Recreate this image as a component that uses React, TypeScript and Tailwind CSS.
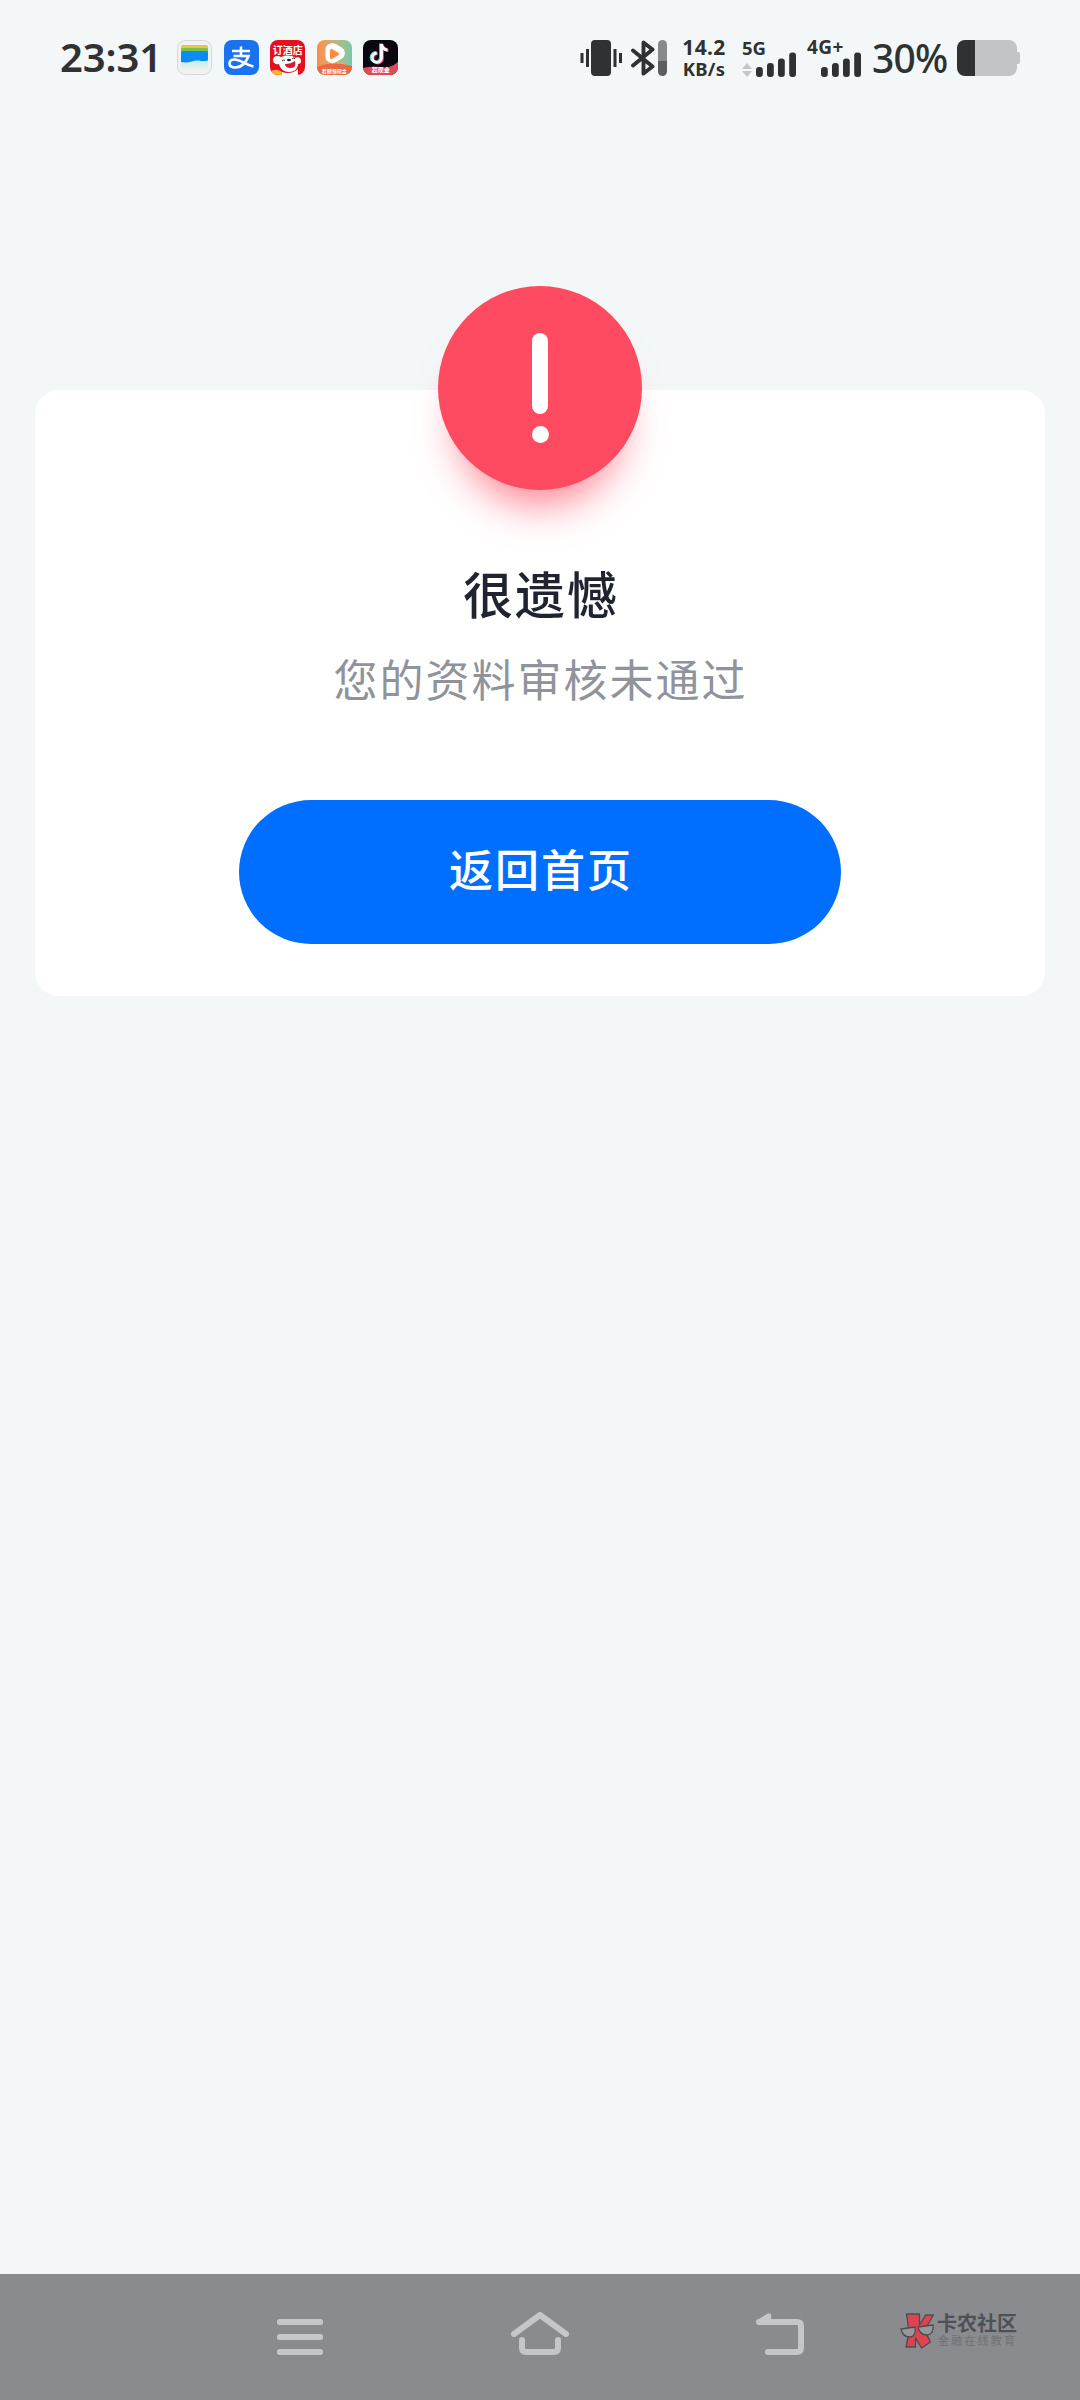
import React from "react";

const ink = "#2f3132";

function WalletIcon() {
  return (
    <svg width="35" height="35" viewBox="0 0 35 35">
      <defs>
        <linearGradient id="walletFade" x1="0" y1="0" x2="0" y2="1">
          <stop offset="0" stopColor="#bdeaf6" />
          <stop offset="1" stopColor="#f3f4ea" />
        </linearGradient>
      </defs>
      <rect x="0.5" y="0.5" width="34" height="34" rx="8" fill="#f0f2f2" stroke="#d6d8da" />
      <rect x="4" y="19" width="27" height="12" rx="3" fill="url(#walletFade)" />
      <rect x="4" y="5" width="27" height="9" rx="2" fill="#e6c545" />
      <rect x="4" y="8" width="27" height="9" rx="1" fill="#7cc142" />
      <path d="M4 12.500q0-1.500 1.500-1.500h24q1.500 0 1.500 1.500V20.500q-5 1-9 0-4-.5-7 1-6 1.500-11 .5z" fill="#0a8cf5" />
    </svg>
  );
}

function AlipayIcon() {
  return (
    <div className="size-[35px] overflow-hidden rounded-[8px] bg-[#1a72f0]">
      <svg width="35" height="35" viewBox="0 0 35 35" fill="none" stroke="#fff" strokeWidth="2.600">
        <path d="M8 11h18M17 6.500v9M9.500 16h15c-2 6-7 11.500-13 11.500-4 0-6-1.500-6-4s2-4 5-4c6 0 10 5 19 7" />
      </svg>
    </div>
  );
}

function HotelIcon() {
  return (
    <div className="relative size-[35px] overflow-hidden rounded-[8px] bg-[#e5101f]">
      <svg width="35" height="35" viewBox="0 0 35 35">
        <path d="M3 20c0-4 4-5 8-3 5-2 11-2 14 1 3-2 6 0 6 3 0 2-1 3-3 3 0 5-4 8-9 8-6 0-9-4-10-8-3 1-6-1-6-4z" fill="#fff" />
        <path d="M15 24c4 0 7-1 10-3 1 4 0 7-4 7-3 0-6-1-6-4z" fill="#d81a2c" />
        <ellipse cx="19" cy="20" rx="2" ry="1.300" fill="#222" />
        <path d="M12 21q1.500-2 3-.500M22 19q1.500-2 3 0" fill="none" stroke="#333" strokeWidth="1" />
        <path d="M12 32c6 2 12 1 16-3v6H12z" fill="#fff" />
        <path d="M0 32c4-3 8-3 12 0v3H0z" fill="#ffb02e" />
      </svg>
      <span className="absolute inset-x-0 top-[5px] text-center text-[10px] leading-[11px] font-bold whitespace-nowrap text-white">订酒店</span>
    </div>
  );
}

function VideoIcon() {
  return (
    <div className="relative size-[35px] overflow-hidden rounded-[8px] bg-linear-to-r from-[#ff8b45] to-[#70cba8]">
      <svg width="35" height="35" viewBox="0 0 35 35">
        <path d="M0 27c12-5 23-4 35-1v9H0z" fill="#ef6740" />
        <path
          d="M11 10c0-4 4-5 7-3.500l4.500 2.700c4 2.300 3.500 6 0 8l-5 2.800c-3 1.500-6.500 0-6.500-3.500z"
          fill="#fff"
          stroke="#fff"
          strokeWidth="5"
          strokeLinejoin="round"
        />
        <path d="M14.500 10.500v7l6-3.500z" fill="#ff8a42" stroke="#ff8a42" strokeWidth="3" strokeLinejoin="round" />
      </svg>
      <span className="absolute inset-x-0 bottom-[1px] text-center text-[5px] leading-[6px] font-bold whitespace-nowrap text-white">看剧领现金</span>
    </div>
  );
}

function TiktokIcon() {
  return (
    <div className="relative size-[35px] overflow-hidden rounded-[8px] bg-[#0b0711]">
      <svg width="35" height="35" viewBox="0 0 35 35" fill="none" strokeWidth="2.800">
        <path d="M18.500 4v13.500a4.700 4.700 0 1 1-4.700-4.500M18.500 4c.5 3.500 2.500 5.500 6 6" stroke="#25e6e0" transform="translate(-1 -.5)" />
        <path d="M18.500 4v13.500a4.700 4.700 0 1 1-4.700-4.500M18.500 4c.5 3.500 2.500 5.500 6 6" stroke="#f7385f" transform="translate(1 .7)" />
        <path d="M18.500 4v13.500a4.700 4.700 0 1 1-4.700-4.500M18.500 4c.5 3.500 2.500 5.500 6 6" stroke="#fff" />
        <path d="M0 28c10-3 18 0 26-1 4-1 6-3 9-5v13H0z" fill="#e24a58" />
      </svg>
      <span className="absolute inset-x-0 bottom-[1px] text-center text-[6px] leading-[7px] font-bold whitespace-nowrap text-white">超现金</span>
    </div>
  );
}

function VibrateIcon() {
  return (
    <svg width="43" height="36" viewBox="0 0 43 36" fill={ink}>
      <rect x="11" width="20" height="36" rx="4" />
      <rect x="0.500" y="13" width="3" height="10" />
      <rect x="6" y="9" width="3" height="18" />
      <rect x="33.500" y="9" width="3" height="18" />
      <rect x="39" y="13" width="3" height="10" />
    </svg>
  );
}

function BluetoothIcon() {
  return (
    <svg width="36" height="36" viewBox="0 0 36 36">
      <path
        d="M2 10.500L21.500 26.500 12.500 33.500V2.500L21.500 9.500 2 25.500"
        fill="none"
        stroke={ink}
        strokeWidth="3.900"
        strokeLinejoin="round"
        strokeLinecap="round"
      />
      <path d="M27 21h9v10.500a4.500 4.500 0 0 1-9 0z" fill="#5c5e5f" />
      <path d="M27 21V4.500a4.500 4.500 0 0 1 9 0V21z" fill="#88898a" />
    </svg>
  );
}

function SignalBars() {
  return (
    <svg width="41" height="25" viewBox="0 0 41 25" fill={ink}>
      <rect y="15" width="6.800" height="10" rx="3" />
      <rect x="11" y="11" width="6.800" height="14" rx="3" />
      <rect x="22" y="6.500" width="6.800" height="18.500" rx="3" />
      <rect x="33.200" y="0.500" width="6.800" height="24.500" rx="3" />
    </svg>
  );
}

function BatteryIcon() {
  return (
    <svg width="63" height="36" viewBox="0 0 63 36">
      <path d="M18 0h34a8 8 0 0 1 8 8v4h1.500q1.500 0 1.500 2v8q0 2-1.500 2H60v4a8 8 0 0 1-8 8H18z" fill="#c1c5c6" />
      <path d="M8 0h10v36H8a8 8 0 0 1-8-8V8a8 8 0 0 1 8-8z" fill={ink} />
    </svg>
  );
}

function StatusBar() {
  return (
    <div className="flex h-[116px] items-start pt-10 pl-[60px] font-['Noto_Sans','Noto_Sans_CJK_SC',sans-serif] text-[#2f3132]">
      <div className="mt-[-3px] w-[117px] text-[40px] leading-[40px] font-semibold tracking-[-0.1px] whitespace-nowrap">23:31</div>
      <div className="flex w-[403px] gap-[11.6px]">
        <WalletIcon />
        <AlipayIcon />
        <HotelIcon />
        <VideoIcon />
        <TiktokIcon />
      </div>
      <VibrateIcon />
      <div className="ml-[8px]">
        <BluetoothIcon />
      </div>
      <div className="ml-[12px] flex w-[50px] flex-col items-center whitespace-nowrap">
        <span className="mt-[-5px] text-[21px] leading-[25px] font-bold tracking-[0.4px]">14.2</span>
        <span className="mt-[-1px] text-[18.500px] leading-[19px] font-bold tracking-[0.2px]">KB/s</span>
      </div>
      <div className="ml-[13px] flex w-[55px] items-start">
        <div className="flex w-[14px] shrink-0 flex-col">
          <span className="text-[18.500px] leading-[15px] font-bold">5G</span>
          <svg className="mt-[8px]" width="10" height="14" viewBox="0 0 10 14" fill="#c3c6c7">
            <path d="M5 0l5 6H0zM5 14l5-6H0z" />
          </svg>
        </div>
        <div className="mt-3 shrink-0">
          <SignalBars />
        </div>
      </div>
      <div className="ml-[10px] flex w-[55px] items-start">
        <span className="w-[14px] shrink-0 text-[19px] leading-[15px] font-bold tracking-[0.4px] whitespace-nowrap">4G+</span>
        <div className="mt-3 shrink-0">
          <SignalBars />
        </div>
      </div>
      <div className="ml-[10px] mt-[-2px] w-[85px] text-[39px] leading-[40px] font-medium tracking-[-0.8px] whitespace-nowrap">30%</div>
      <BatteryIcon />
    </div>
  );
}

function ResultCard() {
  return (
    <div className="mx-[35px] mt-[274px] flex h-[606px] flex-col items-center rounded-[24px] bg-white">
      <div className="mt-[-104px] flex size-[204px] shrink-0 flex-col items-center rounded-full bg-[#ff4b61] shadow-[0_34px_40px_-20px_rgba(255,75,97,0.7)]">
        <div className="mt-[47px] h-[81px] w-4 rounded-full bg-white"></div>
        <div className="mt-[12px] size-[17px] rounded-full bg-white"></div>
      </div>
      <h1 className="mt-[66px] pl-[2px] text-[50px] leading-[72px] font-medium tracking-[2px] text-[#1f2430]">很遗憾</h1>
      <p className="mt-[18px] pl-[1px] text-[44px] leading-[64px] tracking-[2px] text-[#909399]">您的资料审核未通过</p>
      <button className="mt-[90px] h-[144px] w-[602px] rounded-full bg-[#006fff] pb-[9px] pl-[2px] text-[44px] font-medium tracking-[2px] text-white">
        返回首页
      </button>
    </div>
  );
}

function Watermark() {
  return (
    <div className="flex items-start">
      <svg width="36" height="36" viewBox="0 0 36 36" stroke="#4d4c53" strokeWidth="1.300" strokeLinejoin="round">
        <path d="M6.500 1h13v11l6-10h8l-9 15 6 12-9 6-6-10v9H6l3-15z" fill="#dd4450" />
        <path d="M1 16l14-2c1 6-1 10-5 10-5 0-8-3-9-8zM18 14l15-2c1 6-2 10-6 10-5 0-8-3-9-8z" fill="#96979b" />
      </svg>
      <div className="ml-[1px] flex flex-col whitespace-nowrap">
        <span className="text-[20px] leading-[20px] font-bold text-[#4f5057]">卡农社区</span>
        <span className="mt-[1px] ml-[1px] text-[11px] leading-[13px] font-medium tracking-[2.200px] text-[#74757b]">金融在线教育</span>
      </div>
    </div>
  );
}

function NavBar() {
  return (
    <div className="flex h-[126px] items-start bg-[#8a8b8f] pt-[38px] pl-[277px]">
      <svg className="mt-[7px]" width="46" height="36" viewBox="0 0 46 36" fill="#c5c6c9">
        <rect width="46" height="6" rx="2.500" />
        <rect y="15" width="46" height="6" rx="2.500" />
        <rect y="30" width="46" height="6" rx="2.500" />
      </svg>
      <svg className="ml-[188px]" width="58" height="43" viewBox="0 0 58 43" fill="none" stroke="#c5c6c9" strokeWidth="6" strokeLinecap="round" strokeLinejoin="round">
        <path d="M3 22L29 3l26 19M11 28v8q0 4 4 4h28q4 0 4-4v-8" />
      </svg>
      <svg className="ml-[186px]" width="50" height="43" viewBox="0 0 50 43" fill="none" stroke="#c5c6c9" strokeLinecap="round" strokeLinejoin="round">
        <path d="M4 10h38q4 0 4 4v22q0 4-4 4H13" strokeWidth="6" />
        <path d="M14 3.500L4 9.500h10z" fill="#c5c6c9" strokeWidth="4.500" />
      </svg>
      <div className="ml-[95px] mt-[1px]">
        <Watermark />
      </div>
    </div>
  );
}

export default function App() {
  return (
    <div className="flex h-[2400px] w-[1080px] flex-col justify-between overflow-hidden bg-[#f3f7f8] font-['Noto_Sans_CJK_SC',sans-serif]">
      <div className="flex flex-col">
        <StatusBar />
        <ResultCard />
      </div>
      <NavBar />
    </div>
  );
}
